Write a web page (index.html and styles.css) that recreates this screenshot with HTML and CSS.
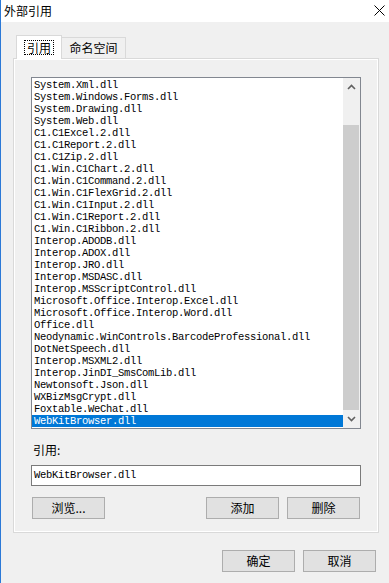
FILE: index.html
```html
<!DOCTYPE html>
<html>
<head>
<meta charset="utf-8">
<link rel="stylesheet" href="styles.css">
</head>
<body>
<div class="window">
  <div class="titlebar">
    <span class="title">外部引用</span>
    <svg class="close" width="11" height="11" viewBox="0 0 11 11"><path d="M0.5 0.5 L10.5 10.5 M10.5 0.5 L0.5 10.5" stroke="#000" stroke-width="1" fill="none"/></svg>
  </div>
  <div class="content">
    <div class="tabs">
      <div class="tab active"><span class="focus">引用</span></div>
      <div class="tab">命名空间</div>
    </div>
    <div class="panel">
      <div class="listbox">
        <div class="items">
          <div class="item">System.Xml.dll</div>
          <div class="item">System.Windows.Forms.dll</div>
          <div class="item">System.Drawing.dll</div>
          <div class="item">System.Web.dll</div>
          <div class="item">C1.C1Excel.2.dll</div>
          <div class="item">C1.C1Report.2.dll</div>
          <div class="item">C1.C1Zip.2.dll</div>
          <div class="item">C1.Win.C1Chart.2.dll</div>
          <div class="item">C1.Win.C1Command.2.dll</div>
          <div class="item">C1.Win.C1FlexGrid.2.dll</div>
          <div class="item">C1.Win.C1Input.2.dll</div>
          <div class="item">C1.Win.C1Report.2.dll</div>
          <div class="item">C1.Win.C1Ribbon.2.dll</div>
          <div class="item">Interop.ADODB.dll</div>
          <div class="item">Interop.ADOX.dll</div>
          <div class="item">Interop.JRO.dll</div>
          <div class="item">Interop.MSDASC.dll</div>
          <div class="item">Interop.MSScriptControl.dll</div>
          <div class="item">Microsoft.Office.Interop.Excel.dll</div>
          <div class="item">Microsoft.Office.Interop.Word.dll</div>
          <div class="item">Office.dll</div>
          <div class="item">Neodynamic.WinControls.BarcodeProfessional.dll</div>
          <div class="item">DotNetSpeech.dll</div>
          <div class="item">Interop.MSXML2.dll</div>
          <div class="item">Interop.JinDI_SmsComLib.dll</div>
          <div class="item">Newtonsoft.Json.dll</div>
          <div class="item">WXBizMsgCrypt.dll</div>
          <div class="item">Foxtable.WeChat.dll</div>
          <div class="item selected">WebKitBrowser.dll</div>
        </div>
        <div class="scrollbar">
          <div class="arrow up"><svg width="9" height="6" viewBox="0 0 9 6"><path d="M1 5 L4.5 1.5 L8 5" stroke="#606060" stroke-width="1.6" fill="none"/></svg></div>
          <div class="track"><div class="thumb"></div></div>
          <div class="arrow down"><svg width="9" height="6" viewBox="0 0 9 6"><path d="M1 1 L4.5 4.5 L8 1" stroke="#606060" stroke-width="1.6" fill="none"/></svg></div>
        </div>
      </div>
      <div class="label">引用:</div>
      <div class="textbox">WebKitBrowser.dll</div>
      <div class="btnrow">
        <button class="btn">浏览...</button>
        <span class="spacer"></span>
        <button class="btn">添加</button>
        <button class="btn">删除</button>
      </div>
    </div>
    <div class="footer">
      <button class="btn">确定</button>
      <button class="btn">取消</button>
    </div>
  </div>
</div>
</body>
</html>
```

FILE: styles.css
```css
* { box-sizing: border-box; }
html, body { margin: 0; padding: 0; background: #f0f0f0; }
body {
  font-family: "Noto Sans CJK SC", "Noto Sans", sans-serif;
  font-size: 12px;
  color: #000;
}
.window {
  width: 389px;
  height: 583px;
  background: #f0f0f0;
  border-left: 1px solid #2b79d7;
  overflow: hidden;
}
.titlebar {
  height: 22px;
  background: #fff;
  display: flex;
  align-items: center;
  padding-left: 3px;
}
.title { font-size: 12px; line-height: 16px; }
.close { margin-left: auto; margin-right: 4px; margin-top: -1px; }
.content { padding: 0 10px 0 12px; }
.tabs {
  margin-top: 13px;
  padding-left: 3px;
  height: 23px;
  display: flex;
  align-items: flex-end;
}
.tab {
  height: 21px;
  width: 65px;
  border: 1px solid #d9d9d9;
  border-bottom: none;
  background: #f0f0f0;
  display: flex;
  align-items: center;
  justify-content: center;
  margin-left: -1px;
  line-height: 14px;
  color: #000;
}
.tab.active {
  position: relative;
  z-index: 1;
  width: 46px;
  height: 24px;
  margin-left: 0;
  margin-bottom: -1px;
  background: #fff;
  padding-bottom: 1px;
}
.focus {
  border: 1px dotted #000;
  padding: 0 2px;
  line-height: 13px;
}
.panel {
  height: 475px;
  border: 1px solid #d9d9d9;
  box-shadow: inset 0 0 0 1px #fff;
  padding: 18px 17px 0 17px;
}
.listbox {
  height: 352px;
  border: 1px solid #828790;
  background: #fff;
  display: flex;
}
.items {
  flex: 1;
  padding-top: 1px;
  font-family: "Liberation Mono", monospace;
  font-size: 10.5px;
  letter-spacing: -0.3px;
  overflow: hidden;
}
.item {
  height: 12px;
  line-height: 12px;
  padding-left: 2px;
  white-space: nowrap;
}
.item.selected { background: #0078d7; color: #fff; }
.scrollbar {
  width: 17px;
  background: #f0f0f0;
  display: flex;
  flex-direction: column;
}
.arrow {
  height: 17px;
  display: flex;
  align-items: center;
  justify-content: center;
}
.arrow.down { height: 18px; }
.track {
  flex: 1;
  display: flex;
  flex-direction: column;
  justify-content: flex-end;
}
.thumb {
  height: 285px;
  background: #cdcdcd;
  margin-right: 1px;
}
.label {
  margin-top: 13px;
  padding-left: 2px;
  line-height: 16px;
  height: 16px;
}
.textbox {
  margin-top: 7px;
  height: 21px;
  border: 1px solid #7a7a7a;
  background: #fff;
  padding-left: 2px;
  font-family: "Liberation Mono", monospace;
  font-size: 10.5px;
  letter-spacing: -0.3px;
  line-height: 19px;
}
.btnrow {
  margin-top: 11px;
  display: flex;
  gap: 8px;
  padding: 0 1px;
}
.spacer { flex: 1; }
.btn {
  width: 73px;
  height: 22px;
  border: 1px solid #adadad;
  background: #e1e1e1;
  font-family: "Noto Sans CJK SC", "Noto Sans", sans-serif;
  font-size: 12px;
  color: #000;
  padding: 0;
  line-height: 18px;
}
.footer {
  margin-top: 17px;
  display: flex;
  justify-content: flex-end;
  gap: 8px;
  padding-right: 3px;
}
```
